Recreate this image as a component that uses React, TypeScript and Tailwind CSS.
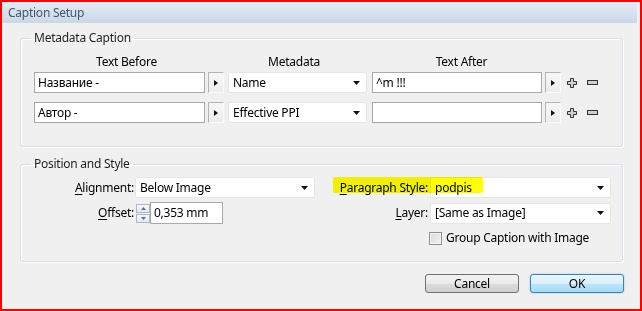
import React from "react";

function ArrowBtn() {
  return (
    <div className="w-[16px] h-[21px] border border-[#b4b4b4] border-r-[#fafafa] border-b-[#fafafa] bg-gradient-to-b from-[#f7f7f7] to-[#ececec] flex items-center justify-center">
      <svg width="4" height="6" viewBox="0 0 4 6">
        <path d="M0 0 L4 3 L0 6 Z" fill="#111" />
      </svg>
    </div>
  );
}

function Plus() {
  return (
    <svg width="10" height="10" viewBox="0 0 10 10">
      <path d="M3.5 0.5 H6.5 V3.5 H9.5 V6.5 H6.5 V9.5 H3.5 V6.5 H0.5 V3.5 H3.5 Z" fill="#d0d0d0" stroke="#333" strokeWidth="1" />
    </svg>
  );
}

function Minus() {
  return (
    <svg width="11" height="5" viewBox="0 0 11 5">
      <rect x="0.5" y="0.5" width="10" height="4" fill="#d0d0d0" stroke="#333" strokeWidth="1" />
    </svg>
  );
}

function DropTri() {
  return (
    <svg width="7" height="4" viewBox="0 0 7 4">
      <path d="M0 0 H7 L3.5 4 Z" fill="#111" />
    </svg>
  );
}

function TextBox({ value, w }: { value: string; w: string }) {
  return (
    <div className={`${w} h-[21px] bg-white border border-[#a9a9a9] flex items-center pl-[3px] whitespace-nowrap`}>
      {value}
    </div>
  );
}

function Select({ value, w, h = "h-[21px]" }: { value: string; w: string; h?: string }) {
  return (
    <div className={`${w} ${h} bg-white border border-[#e6e6e6] rounded-[2px] flex items-center pl-[4px] pr-[6px] justify-between whitespace-nowrap`}>
      <span>{value}</span>
      <DropTri />
    </div>
  );
}

function MetaRow({ before, meta, after }: { before: string; meta: string; after: string }) {
  return (
    <div className="flex items-center">
      <TextBox value={before} w="w-[171px]" />
      <div className="ml-[3px]">
        <ArrowBtn />
      </div>
      <div className="ml-[4px]">
        <Select value={meta} w="w-[139px]" />
      </div>
      <div className="ml-[5px]">
        <TextBox value={after} w="w-[170px]" />
      </div>
      <div className="ml-[3px]">
        <ArrowBtn />
      </div>
      <div className="ml-[6px] flex items-center">
        <Plus />
      </div>
      <div className="ml-[10px] flex items-center">
        <Minus />
      </div>
    </div>
  );
}

export default function App() {
  return (
    <div className="w-[642px] h-[311px] border-2 border-[#ff0000] bg-[#f0f0f0] relative font-['Noto_Sans',sans-serif] text-[12px] leading-[16px] tracking-[-0.25px] text-black overflow-hidden">
      <div className="h-[21px] bg-gradient-to-b from-[#e4ecf5] to-[#c9d7e7] pl-[6px] flex items-center text-[#46566a] border-r-[3px] border-[#eef2f6]">
        Caption Setup
      </div>

      <fieldset className="ml-[18px] mt-[7px] w-[603px] border border-[#d5dfe5] rounded-[3px] pl-[13px] pt-[8px] pb-[23px] shadow-[inset_1px_1px_0_#ffffff,1px_1px_0_#ffffff]">
        <legend className="-ml-[3px] px-[3px] text-[#1e1e1e]">Metadata Caption</legend>
        <div className="flex">
          <div className="w-[185px] text-center">Text Before</div>
          <div className="w-[150px] text-center">Metadata</div>
          <div className="w-[185px] text-center">Text After</div>
        </div>
        <div className="mt-[2px]">
          <MetaRow before="Название -" meta="Name" after="^m !!!" />
        </div>
        <div className="mt-[9px]">
          <MetaRow before="Автор -" meta="Effective PPI" after="" />
        </div>
      </fieldset>

      <fieldset className="ml-[18px] mt-[9px] w-[603px] border border-[#d5dfe5] rounded-[3px] pl-[13px] pt-[5px] pb-[15px] shadow-[inset_1px_1px_0_#ffffff,1px_1px_0_#ffffff]">
        <legend className="-ml-[3px] px-[3px] text-[#1e1e1e]">Position and Style</legend>
        <div className="flex items-center h-[21px]">
          <div className="w-[101px] text-right pr-[1px]">
            <span className="underline underline-offset-2">A</span>lignment:
          </div>
          <Select value="Below Image" w="w-[180px]" />
          <div className="w-[115px] text-right pr-[2px]">
            <span className="underline underline-offset-2">P</span>aragraph Style:
          </div>
          <Select value="podpis" w="w-[181px]" />
        </div>
        <div className="flex items-center h-[22px] mt-[4px]">
          <div className="w-[101px] text-right pr-[1px]">
            <span className="underline underline-offset-2">O</span>ffset:
          </div>
          <div className="w-[180px] flex items-center">
            <div className="ml-[1px] w-[14px] h-[19px] flex flex-col">
              <div className="h-[9px] border border-[#aeb8c4] bg-gradient-to-b from-[#f6f8fa] to-[#e4e9ef] flex items-center justify-center">
                <svg width="5" height="3" viewBox="0 0 5 3">
                  <path d="M0 3 L2.5 0 L5 3 Z" fill="#5b6f95" />
                </svg>
              </div>
              <div className="h-[9px] mt-[1px] border border-[#aeb8c4] bg-gradient-to-b from-[#f6f8fa] to-[#e4e9ef] flex items-center justify-center">
                <svg width="5" height="3" viewBox="0 0 5 3">
                  <path d="M0 0 L5 0 L2.5 3 Z" fill="#5b6f95" />
                </svg>
              </div>
            </div>
            <div className="w-[73px] h-[22px] bg-white border border-[#a9a9a9] flex items-center pl-[3px] whitespace-nowrap">
              0,353 mm
            </div>
          </div>
          <div className="w-[115px] text-right pr-[2px]">
            <span className="underline underline-offset-2">L</span>ayer:
          </div>
          <Select value="[Same as Image]" w="w-[181px]" />
        </div>
        <div className="flex items-center h-[16px] mt-[6px]">
          <div className="w-[395px]" />
          <div className="w-[13px] h-[13px] border border-[#8e8f8f] bg-gradient-to-br from-[#d9d9d9] to-[#f4f4f4] shadow-[inset_0_0_0_1px_#f4f4f4]" />
          <div className="ml-[4px]">Group Caption with Image</div>
        </div>
      </fieldset>

      <div className="flex justify-end gap-[11px] pr-[16px] mt-[12px]">
        <div className="w-[94px] h-[19px] rounded-[3px] border border-[#707070] bg-[linear-gradient(to_bottom,#f2f2f2_0%,#ebebeb_50%,#dddddd_51%,#cfcfcf_100%)] flex items-center justify-center">
          Cancel
        </div>
        <div className="w-[94px] h-[19px] rounded-[3px] border border-[#3c7fb1] bg-[linear-gradient(to_bottom,#eaf6fd_0%,#d9f0fc_50%,#bee6fd_51%,#a7d9f5_100%)] shadow-[0_0_2px_#7ec4ee] flex items-center justify-center">
          OK
        </div>
      </div>

      <div className="absolute left-[331px] top-[175px] w-[150px] h-[16px] bg-[#ffff00] mix-blend-multiply rounded-[2px]" />
    </div>
  );
}
